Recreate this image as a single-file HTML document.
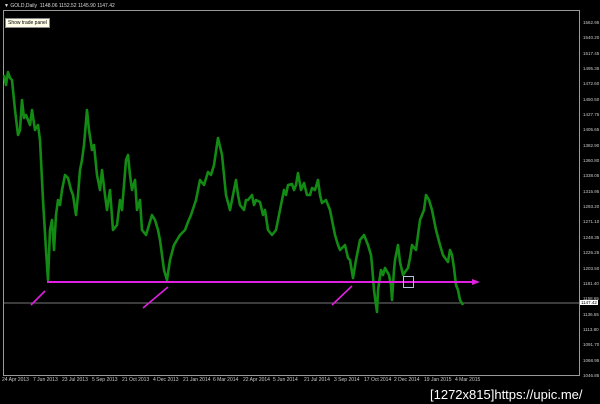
<!DOCTYPE html>
<html><head><meta charset="utf-8"><style>
html,body{margin:0;padding:0;background:#000;width:600px;height:404px;overflow:hidden;font-family:"Liberation Sans",sans-serif}
.t{position:absolute;color:#c8c8c8;font-size:5px;white-space:nowrap}
</style></head><body>
<svg width="600" height="404" style="position:absolute;left:0;top:0">
<rect x="3.5" y="10.5" width="576" height="365" fill="none" stroke="#9a9a9a" stroke-width="1"/>
<line x1="4" y1="303" x2="579" y2="303" stroke="#777" stroke-width="1"/>
<polyline fill="none" stroke="#138a13" stroke-width="2.6" stroke-linejoin="round" points="4,75 6,85 8,72 10,78 12,80 15,110 18,135 20,130 22,100 24,118 26,115 30,125 32,110 35,130 38,125 40,140 43,200 46,250 48,280 50,230 52,220 54,250 56,215 58,200 60,205 62,190 65,175 68,178 71,190 73,195 76,215 78,195 80,170 82,160 84,145 87,110 89,130 92,150 94,145 97,175 100,190 102,170 105,195 107,210 110,190 113,230 117,225 120,200 122,210 126,160 128,155 130,175 132,190 135,180 137,210 140,200 142,230 146,235 149,225 152,215 155,220 158,230 160,240 164,270 167,280 170,260 174,245 177,240 180,235 185,230 188,222 191,215 196,200 200,180 204,185 208,172 211,175 214,165 218,138 222,155 226,195 230,210 233,195 236,180 238,195 240,205 244,210 246,200 248,200 252,195 254,205 256,200 260,202 263,215 265,210 268,230 272,235 276,230 280,210 284,190 286,195 288,185 292,184 294,190 296,185 298,173 301,190 304,183 307,195 310,195 312,188 315,190 318,180 320,195 322,203 326,200 330,210 333,225 335,235 338,245 340,250 345,245 348,258 350,260 353,278 356,260 358,250 360,240 364,235 368,245 371,255 372,265 374,290 376,305 377,312 378,290 381,270 383,275 385,268 389,275 391,285 392,300 394,270 395,260 398,245 400,262 403,275 405,272 408,268 410,258 412,245 416,250 418,235 420,220 424,210 426,195 429,200 432,210 434,220 436,230 440,245 443,255 445,258 448,262 450,250 452,255 454,268 456,285 458,290 460,300 463,305"/>
<line x1="47" y1="282" x2="474" y2="282" stroke="#e020e0" stroke-width="2"/>
<polygon points="480,282 472,279 472,285" fill="#e020e0"/>
<line x1="31" y1="305" x2="45" y2="291" stroke="#e020e0" stroke-width="1.6"/>
<line x1="143" y1="308" x2="168" y2="287" stroke="#e020e0" stroke-width="1.6"/>
<line x1="332" y1="305" x2="352" y2="286" stroke="#e020e0" stroke-width="1.6"/>
<rect x="403.5" y="276.5" width="10" height="11" fill="none" stroke="#b0c4de" stroke-width="1"/>
</svg>
<div class="t" style="left:4px;top:3px;color:#ddd">▼ GOLD,Daily&nbsp; 1148.06 1152.52 1145.90 1147.42</div>
<div style="position:absolute;left:5px;top:18px;background:#fffde8;color:#000;font-size:5px;padding:1px 2px;border:1px solid #888">Show trade panel</div>
<div style="position:absolute;left:580px;top:0;width:20px;height:380px;font-size:4.5px;color:#c8c8c8">
<div style="position:absolute;left:3px;top:15px;line-height:15.35px;white-space:nowrap">1562.95<br>1540.20<br>1517.45<br>1495.35<br>1472.60<br>1450.50<br>1427.75<br>1405.65<br>1382.90<br>1360.80<br>1338.05<br>1315.95<br>1293.20<br>1271.10<br>1248.35<br>1226.25<br>1203.50<br>1181.40<br>1158.65<br>1136.55<br>1113.80<br>1091.70<br>1068.95<br>1046.85</div>
<div style="position:absolute;left:0;top:300px;background:#fff;color:#000;padding:0 1px">1147.42</div>
</div>
<div class="t" style="left:2px;top:377px">24 Apr 2013</div>
<div class="t" style="left:33px;top:377px">7 Jun 2013</div>
<div class="t" style="left:62px;top:377px">23 Jul 2013</div>
<div class="t" style="left:92px;top:377px">5 Sep 2013</div>
<div class="t" style="left:122px;top:377px">21 Oct 2013</div>
<div class="t" style="left:153px;top:377px">4 Dec 2013</div>
<div class="t" style="left:183px;top:377px">21 Jan 2014</div>
<div class="t" style="left:213px;top:377px">6 Mar 2014</div>
<div class="t" style="left:243px;top:377px">22 Apr 2014</div>
<div class="t" style="left:273px;top:377px">5 Jun 2014</div>
<div class="t" style="left:304px;top:377px">21 Jul 2014</div>
<div class="t" style="left:334px;top:377px">3 Sep 2014</div>
<div class="t" style="left:364px;top:377px">17 Oct 2014</div>
<div class="t" style="left:394px;top:377px">2 Dec 2014</div>
<div class="t" style="left:424px;top:377px">19 Jan 2015</div>
<div class="t" style="left:455px;top:377px">4 Mar 2015</div>
<div style="position:absolute;left:430px;top:386px;color:#fff;font-size:13px;white-space:nowrap;line-height:17px">[1272x815]https://upic.me/</div>
</body></html>
